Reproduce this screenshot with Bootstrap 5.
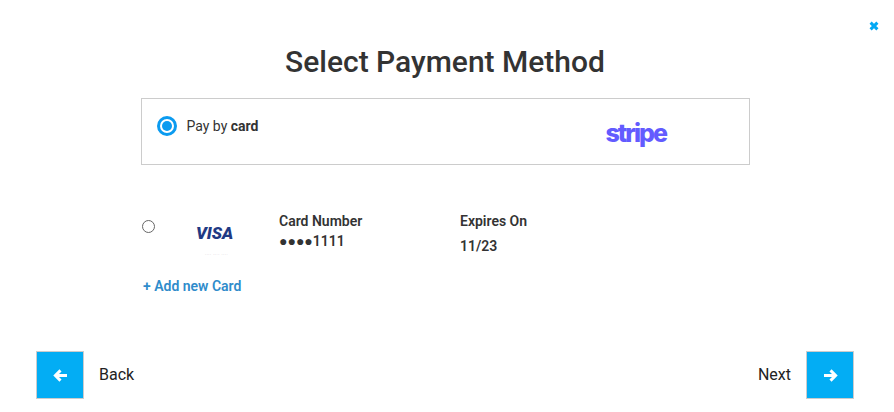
<!DOCTYPE html>
<html lang="en">
<head>
<meta charset="utf-8">
<title>Select Payment Method</title>
<link href="https://cdn.jsdelivr.net/npm/bootstrap@5.3.0/dist/css/bootstrap.min.css" rel="stylesheet">
<style>
html, body { height: 412px; overflow: hidden; background: #fff; }
body { font-family: Roboto, "Liberation Sans", sans-serif; color: #333; font-size: 14px; }
.pay-page { height: 412px; padding: 0 40px 13px 36px; }
.pay-close { padding: 21px 0 0; height: 32px; margin-right: -25px; line-height: 0; }
.pay-title { font-size: 30px; font-weight: 500; line-height: 36px; margin: 12px 0 18px; color: #333; text-align: center; }
.pay-body { width: 609px; margin-left: 105px; }
.pay-box { height: 67px; border: 1px solid #ccc; padding: 17px 15px; }
.pay-radio-on { width: 20px; height: 20px; border: 3px solid #0b9bf0; border-radius: 50%; flex: none; }
.pay-radio-on::after { content: ""; display: block; width: 10px; height: 10px; margin: 2px; background: #0b9bf0; border-radius: 50%; }
.pay-label { margin-left: 9.5px; line-height: 20px; }
.pay-label b { font-weight: 700; }
.stripe-mark { font-family: Inter, Roboto, sans-serif; font-weight: 800; font-size: 25px; letter-spacing: -2px; line-height: 30px; color: #635bff; margin-left: 347px; margin-top: 2px; }
.pay-card { margin-top: 46px; height: 46px; }
.pay-radio-off { width: 13px; height: 13px; border: 1px solid #666; border-radius: 50%; margin: 9px 0 0 1px; flex: none; }
.visa-cell { width: 124px; padding-left: 41px; }
.visa-mark { font-family: Roboto, "Liberation Sans", sans-serif; font-style: italic; font-weight: 900; font-size: 17px; line-height: 20px; color: #1f3a84; margin-top: 12px; letter-spacing: -.1px; }
.visa-foot { font-size: 4px; line-height: 4px; color: #999; margin: 9px 0 0 9px; white-space: nowrap; letter-spacing: .6px; }
.card-col { width: 181px; font-weight: 600; line-height: 20px; }
.exp-value { margin-top: 5px; }
.add-card { display: block; margin: 19px 0 0 2px; color: #2f8ccb; font-weight: 600; line-height: 20px; text-decoration: none; }
.pay-nav { font-size: 16px; color: #222; }
.pay-sq { width: 48px; height: 48px; background: #03adf4; border: 1px solid #ccc; border-radius: 0; padding: 0; }
.pay-sq:hover { background: #03adf4; }
.pay-gap { gap: 15px; }
</style>
</head>
<body>
<div class="pay-page d-flex flex-column">
  <div class="pay-close d-flex justify-content-end">
    <svg width="10" height="10" viewBox="0 0 10 10" aria-label="Close"><path d="M1.6 1.6 8.4 8.4M8.4 1.6 1.6 8.4" stroke="#03a9f4" stroke-width="3"/></svg>
  </div>
  <h1 class="pay-title">Select Payment Method</h1>
  <div class="pay-body">
    <div class="pay-box d-flex align-items-start">
      <span class="pay-radio-on"></span>
      <span class="pay-label">Pay by <b>card</b></span>
      <span class="stripe-mark">stripe</span>
    </div>
    <div class="pay-card d-flex">
      <span class="pay-radio-off"></span>
      <div class="visa-cell">
        <div class="visa-mark">VISA</div>
        <div class="visa-foot">.... .... ....</div>
      </div>
      <div class="card-col">
        <div>Card Number</div>
        <div>●●●●1111</div>
      </div>
      <div class="card-col">
        <div>Expires On</div>
        <div class="exp-value">11/23</div>
      </div>
    </div>
    <a class="add-card" href="#">+ Add new Card</a>
  </div>
  <div class="pay-nav d-flex justify-content-between align-items-center mt-auto">
    <div class="d-flex align-items-center pay-gap">
      <button class="btn pay-sq d-flex align-items-center justify-content-center" type="button" aria-label="Back">
        <svg width="15" height="13" viewBox="0 0 16 14"><path d="M15 7H3M8 1.5 2.5 7 8 12.5" fill="none" stroke="#fff" stroke-width="3.2"/></svg>
      </button>
      <span>Back</span>
    </div>
    <div class="d-flex align-items-center pay-gap">
      <span>Next</span>
      <button class="btn pay-sq d-flex align-items-center justify-content-center" type="button" aria-label="Next">
        <svg width="15" height="13" viewBox="0 0 16 14"><path d="M1 7H13M8 1.5 13.5 7 8 12.5" fill="none" stroke="#fff" stroke-width="3.2"/></svg>
      </button>
    </div>
  </div>
</div>
<script src="https://cdn.jsdelivr.net/npm/bootstrap@5.3.0/dist/js/bootstrap.bundle.min.js"></script>
</body>
</html>
